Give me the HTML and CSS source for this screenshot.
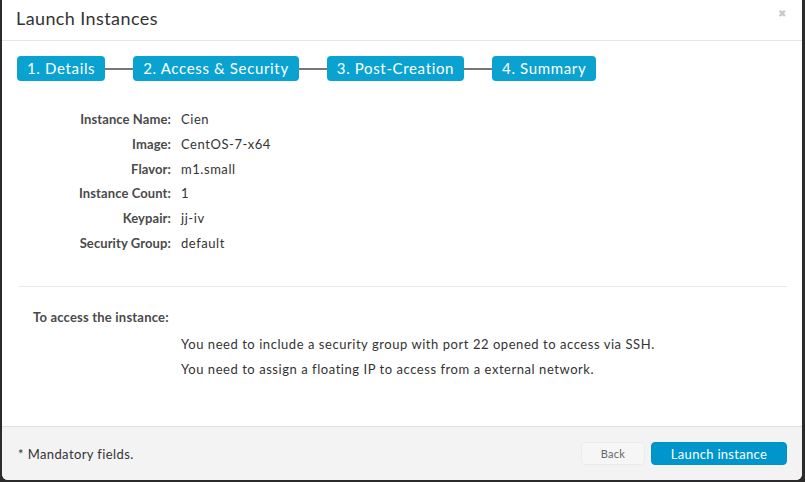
FILE: index.html
```html
<!DOCTYPE html>
<html>
<head>
<meta charset="utf-8">
<link rel="stylesheet" href="styles.css">
</head>
<body>
<div class="modal">
  <div class="modal-header">
    <h3 class="title">Launch Instances</h3>
    <span class="close">&#x2716;</span>
  </div>
  <div class="modal-body">
    <div class="wizard">
      <span class="step">1. Details</span>
      <span class="connector"></span>
      <span class="step">2. Access &amp; Security</span>
      <span class="connector"></span>
      <span class="step">3. Post-Creation</span>
      <span class="connector"></span>
      <span class="step">4. Summary</span>
    </div>
    <dl class="summary">
      <dt>Instance Name:</dt><dd>Cien</dd>
      <dt>Image:</dt><dd>CentOS-7-x64</dd>
      <dt>Flavor:</dt><dd>m1.small</dd>
      <dt>Instance Count:</dt><dd>1</dd>
      <dt>Keypair:</dt><dd>jj-iv</dd>
      <dt>Security Group:</dt><dd>default</dd>
    </dl>
    <hr class="sep">
    <div class="access">
      <div class="access-title">To access the instance:</div>
      <ul class="access-list">
        <li>You need to include a security group with port 22 opened to access via SSH.</li>
        <li>You need to assign a floating IP to access from a external network.</li>
      </ul>
    </div>
  </div>
  <div class="modal-footer">
    <span class="mandatory">* Mandatory fields.</span>
    <div class="buttons">
      <button class="btn btn-back">Back</button>
      <button class="btn btn-primary">Launch instance</button>
    </div>
  </div>
</div>
</body>
</html>
```
FILE: styles.css
```css
html, body {
  margin: 0;
  padding: 0;
  height: 100%;
  background: #2b2b2b;
}
body {
  font-family: Lato, "Noto Sans", sans-serif;
  color: #333;
  padding: 0 3px 2px 2px;
  box-sizing: border-box;
}
.modal {
  background: #fff;
  height: 480px;
  border-radius: 0 0 6px 6px;
  display: flex;
  flex-direction: column;
  overflow: hidden;
}
.modal-header {
  height: 41px;
  border-bottom: 1px solid #e5e5e5;
  display: flex;
  align-items: center;
  justify-content: space-between;
  padding: 0 16px 0 14px;
  box-sizing: border-box;
}
.title {
  margin: 0;
  font-size: 18px;
  font-weight: normal;
  color: #333;
  letter-spacing: 0.4px;
  padding-bottom: 4px;
}
.close {
  font-size: 10px;
  color: #c8c8c8;
  padding-bottom: 14px;
}
.modal-body {
  flex: 1;
  padding: 15px 15px 0 15px;
}
.wizard {
  display: flex;
  align-items: center;
  height: 25px;
}
.step {
  background: #0aa3d1;
  color: #fff;
  font-size: 15px;
  letter-spacing: 0.65px;
  height: 25px;
  line-height: 24px;
  padding: 0 10px;
  border-radius: 4px;
  white-space: nowrap;
}
.connector {
  width: 28px;
  height: 2px;
  background: #777;
}
.summary {
  display: grid;
  grid-template-columns: 154px 1fr;
  column-gap: 10px;
  row-gap: 0;
  margin: 26px 0 0 0;
  font-size: 13px;
  letter-spacing: 0.55px;
  line-height: 24.8px;
}
.summary dt {
  text-align: right;
  font-weight: bold;
  color: #4a4a4a;
  letter-spacing: 0.1px;
}
.summary dd {
  margin: 0;
  color: #333;
}
.sep {
  border: 0;
  border-top: 1px solid #e8e8e8;
  margin: 30px 0 0 2px;
}
.access {
  padding: 20px 0 0 16px;
  font-size: 13px;
  letter-spacing: 0.55px;
}
.access-title {
  font-weight: bold;
  color: #4a4a4a;
  letter-spacing: 0.2px;
  line-height: 20px;
}
.access-list {
  list-style: none;
  margin: 5px 0 0 148px;
  padding: 0;
  line-height: 25px;
  color: #333;
}
.modal-footer {
  height: 53px;
  border-top: 1px solid #e0e0e0;
  background: #f3f3f3;
  display: flex;
  align-items: center;
  justify-content: space-between;
  padding: 0 15px 0 16px;
}
.mandatory {
  font-size: 13px;
  letter-spacing: 0.4px;
  color: #333;
}
.buttons {
  display: flex;
  gap: 6px;
}
.btn {
  font-family: inherit;
  height: 23px;
  border-radius: 4px;
  font-size: 13px;
  padding: 0;
  cursor: pointer;
}
.btn-back {
  width: 64px;
  background: #f6f6f6;
  border: 1px solid #ececec;
  color: #666;
  font-size: 11px;
  letter-spacing: 0.3px;
}
.btn-primary {
  width: 136px;
  background: #0096cc;
  border: 1px solid #0091c6;
  color: #fff;
  letter-spacing: 0.3px;
}
```
